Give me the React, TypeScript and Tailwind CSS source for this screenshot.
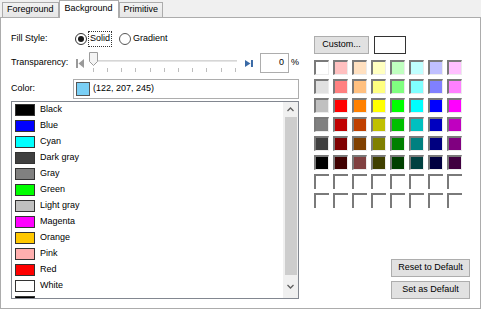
import React from 'react'

const listColors: [string, string][] = [
  ['Black', '#000000'],
  ['Blue', '#0000ff'],
  ['Cyan', '#00ffff'],
  ['Dark gray', '#404040'],
  ['Gray', '#808080'],
  ['Green', '#00ff00'],
  ['Light gray', '#c0c0c0'],
  ['Magenta', '#ff00ff'],
  ['Orange', '#ffc800'],
  ['Pink', '#ffafaf'],
  ['Red', '#ff0000'],
  ['White', '#ffffff'],
]

const palette: (string | null)[][] = [
  ['#ffffff', '#ffc0c0', '#ffe0c0', '#ffffc0', '#c0ffc0', '#c0ffff', '#c0c0ff', '#ffc0ff'],
  ['#e0e0e0', '#ff8080', '#ffc080', '#ffff80', '#80ff80', '#80ffff', '#8080ff', '#ff80ff'],
  ['#c0c0c0', '#ff0000', '#ff8000', '#ffff00', '#00ff00', '#00ffff', '#0000ff', '#ff00ff'],
  ['#808080', '#c00000', '#c04000', '#c0c000', '#00c000', '#00c0c0', '#0000c0', '#c000c0'],
  ['#404040', '#800000', '#804000', '#808000', '#008000', '#008080', '#000080', '#800080'],
  ['#000000', '#400000', '#804040', '#404000', '#004000', '#004040', '#000040', '#400040'],
  [null, null, null, null, null, null, null, null],
  [null, null, null, null, null, null, null, null],
]

const Tab = ({ label, active }: { label: string; active?: boolean }) => (
  <div
    className={
      active
        ? 'h-[18px] px-[5px] pt-[1px] bg-white border border-b-0 border-[#acacac] -mb-px z-10 relative'
        : 'h-[15px] px-[4px] bg-gradient-to-b from-[#f2f2f2] to-[#e6e6e6] border border-b-0 border-[#acacac] flex items-center'
    }
  >
    {label}
  </div>
)

const Btn = ({ label, className }: { label: string; className?: string }) => (
  <div
    className={`h-[18px] flex items-center justify-center bg-[#e1e1e1] border border-[#adadad] text-black ${className ?? ''}`}
  >
    {label}
  </div>
)

export default function App() {
  const ticks = Array.from({ length: 11 }, (_, i) => i)
  return (
    <div
      className="w-[481px] h-[309px] bg-[#f0f0f0] text-[9px] text-black overflow-hidden"
      style={{ fontFamily: '"Liberation Sans", Arial, sans-serif' }}
    >
      {/* tabs */}
      <div className="flex items-end h-[17px] pl-[2px]">
        <Tab label="Foreground" />
        <Tab label="Background" active />
        <Tab label="Primitive" />
      </div>

      {/* panel */}
      <div className="w-[481px] h-[292px] bg-white border border-[#acacac] flex">
        {/* left column */}
        <div className="ml-[10px] w-[288px] flex flex-col">
          <div className="mt-[14px] h-[14px] flex items-center">
            <div className="w-[64px]">Fill Style:</div>
            <div className="w-[12px] h-[12px] rounded-full border border-[#333] flex items-center justify-center">
              <div className="w-[6px] h-[6px] rounded-full bg-[#1a1a1a]" />
            </div>
            <div className="ml-[1px] px-[1px] border border-dotted border-[#333]">Solid</div>
            <div className="ml-[7px] w-[12px] h-[12px] rounded-full border border-[#555]" />
            <div className="ml-[2px]">Gradient</div>
          </div>

          <div className="mt-[7px] h-[20px] flex items-center">
            <div className="w-[65px]">Transparency:</div>
            <svg width="8" height="9" viewBox="0 0 8 9">
              <rect x="0" y="0" width="2" height="9" fill="#9a9a9a" />
              <path d="M8 0 L2.5 4.5 L8 9 Z" fill="#9a9a9a" />
            </svg>
            <div className="relative w-[162px] h-[20px]">
              <div className="absolute left-[8px] right-[8px] top-[7px] h-[2px] bg-[#e5e5e5] border-t border-[#d6d6d6]" />
              {ticks.map(i => (
                <div
                  key={i}
                  className="absolute top-[15px] w-px h-[4px] bg-[#bdbdbd]"
                  style={{ left: 9 + i * 14.2 }}
                />
              ))}
              <svg className="absolute left-[5px] top-[-1px]" width="9" height="14" viewBox="0 0 9 14">
                <path d="M0.5 0.5 H8.5 V9.5 L4.5 13.5 L0.5 9.5 Z" fill="#f4f4f4" stroke="#9c9c9c" />
              </svg>
            </div>
            <svg width="8" height="7" viewBox="0 0 8 7">
              <path d="M0 0 L5.5 3.5 L0 7 Z" fill="#3a6aa6" />
              <rect x="6" y="0" width="2" height="7" fill="#3a6aa6" />
            </svg>
            <div className="ml-[7px] w-[29px] h-[20px] border border-[#adadad] flex items-center justify-end pr-[4px]">
              0
            </div>
            <div className="ml-[2px]">%</div>
          </div>

          <div className="mt-[6px] h-[20px] flex items-center">
            <div className="w-[62px]">Color:</div>
            <div className="w-[226px] h-[20px] border border-[#adadad] flex items-center pl-[2px]">
              <div className="w-[14px] h-[14px] bg-[#7acff5] border border-[#555]" />
              <div className="ml-[3px]">(122, 207, 245)</div>
            </div>
          </div>

          <div className="mt-[2px] w-[288px] h-[198px] border border-[#828790] flex">
            <div className="flex-1 overflow-hidden">
              {listColors.map(([name, c], i) => (
                <div key={i} className="h-[16px] flex items-center pl-[3px]">
                  <div className="w-[20px] h-[12px] border border-[#333]" style={{ backgroundColor: c }} />
                  <div className="ml-[5px]">{name}</div>
                </div>
              ))}
              <div className="h-[16px] flex items-start pl-[3px] pt-[2px]">
                <div className="w-[20px] h-[12px] border border-[#333] bg-black" />
              </div>
            </div>
            <div className="w-[15px] bg-[#f0f0f0] flex flex-col items-center">
              <div className="h-[15px] flex items-center justify-center">
                <svg width="7" height="5" viewBox="0 0 7 5">
                  <path d="M0.5 4 L3.5 1 L6.5 4" fill="none" stroke="#606060" strokeWidth="1.3" />
                </svg>
              </div>
              <div className="w-[12px] h-[158px] bg-[#cdcdcd]" />
              <div className="flex-1 flex items-center justify-center">
                <svg width="7" height="5" viewBox="0 0 7 5">
                  <path d="M0.5 1 L3.5 4 L6.5 1" fill="none" stroke="#606060" strokeWidth="1.3" />
                </svg>
              </div>
            </div>
          </div>
        </div>

        {/* right column */}
        <div className="ml-[15px] w-[156px] flex flex-col">
          <div className="mt-[18px] flex items-center">
            <Btn label="Custom..." className="w-[55px]" />
            <div className="ml-[5px] w-[32px] h-[18px] border border-[#333] bg-white" />
          </div>
          <div className="mt-[6px] grid grid-cols-[repeat(8,15px)] gap-[4px]">
            {palette.flat().map((c, i) => (
              <div
                key={i}
                className={
                  c
                    ? 'w-[15px] h-[15px] border-t-2 border-l-2 border-r border-b border-t-[#7a7a7a] border-l-[#7a7a7a] border-r-[#ececec] border-b-[#ececec]'
                    : 'w-[15px] h-[15px] border-t-2 border-l-2 border-t-[#7a7a7a] border-l-[#7a7a7a]'
                }
                style={{ backgroundColor: c ?? '#ffffff' }}
              />
            ))}
          </div>
          <div className="mt-auto mb-[9px] flex flex-col items-end gap-[4px]">
            <Btn label="Reset to Default" className="w-[79px]" />
            <Btn label="Set as Default" className="w-[79px]" />
          </div>
        </div>
      </div>
    </div>
  )
}
